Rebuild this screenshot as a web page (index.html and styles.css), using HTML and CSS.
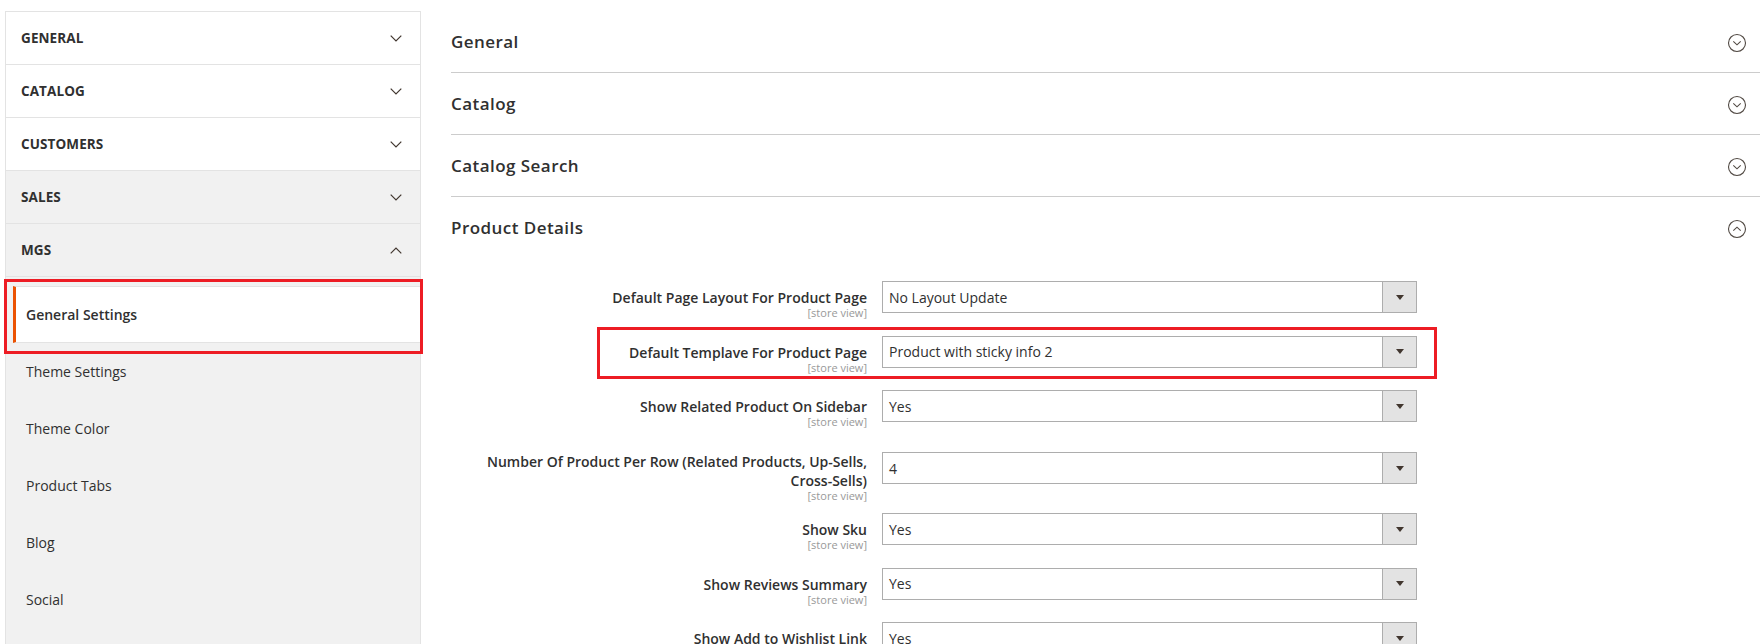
FILE: index.html
```html
<!DOCTYPE html>
<html lang="en">
<head>
<meta charset="utf-8">
<title>Configuration</title>
<link rel="stylesheet" href="styles.css">
</head>
<body>
<div class="page">
  <aside class="sidebar">
    <div class="nav-section">
      <div class="nav-title"><span>General</span>
        <svg class="chev" viewBox="0 0 12 7" width="12" height="7"><polyline points="0.7,0.7 6,6 11.3,0.7"/></svg>
      </div>
    </div>
    <div class="nav-section">
      <div class="nav-title"><span>Catalog</span>
        <svg class="chev" viewBox="0 0 12 7" width="12" height="7"><polyline points="0.7,0.7 6,6 11.3,0.7"/></svg>
      </div>
    </div>
    <div class="nav-section">
      <div class="nav-title"><span>Customers</span>
        <svg class="chev" viewBox="0 0 12 7" width="12" height="7"><polyline points="0.7,0.7 6,6 11.3,0.7"/></svg>
      </div>
    </div>
    <div class="nav-section muted">
      <div class="nav-title"><span>Sales</span>
        <svg class="chev" viewBox="0 0 12 7" width="12" height="7"><polyline points="0.7,0.7 6,6 11.3,0.7"/></svg>
      </div>
    </div>
    <div class="nav-section muted open">
      <div class="nav-title"><span>MGS</span>
        <svg class="chev" viewBox="0 0 12 7" width="12" height="7"><polyline points="0.7,6.3 6,1 11.3,6.3"/></svg>
      </div>
      <ul class="nav-items">
        <li class="nav-item active">General Settings<span class="mark mark-nav"></span></li>
        <li class="nav-item">Theme Settings</li>
        <li class="nav-item">Theme Color</li>
        <li class="nav-item">Product Tabs</li>
        <li class="nav-item">Blog</li>
        <li class="nav-item">Social</li>
      </ul>
    </div>
  </aside>

  <main class="content">
    <div class="section">
      <span class="section-title">General</span>
      <svg class="toggle" viewBox="0 0 20 20" width="20" height="20"><circle cx="10" cy="10" r="8.5"/><polyline points="6.3,8.3 10,11.8 13.7,8.3"/></svg>
    </div>
    <div class="section">
      <span class="section-title">Catalog</span>
      <svg class="toggle" viewBox="0 0 20 20" width="20" height="20"><circle cx="10" cy="10" r="8.5"/><polyline points="6.3,8.3 10,11.8 13.7,8.3"/></svg>
    </div>
    <div class="section">
      <span class="section-title">Catalog Search</span>
      <svg class="toggle" viewBox="0 0 20 20" width="20" height="20"><circle cx="10" cy="10" r="8.5"/><polyline points="6.3,8.3 10,11.8 13.7,8.3"/></svg>
    </div>
    <div class="section open">
      <span class="section-title">Product Details</span>
      <svg class="toggle" viewBox="0 0 20 20" width="20" height="20"><circle cx="10" cy="10" r="8.5"/><polyline points="6.3,11.7 10,8.2 13.7,11.7"/></svg>
    </div>

    <div class="fieldset">
      <div class="field">
        <div class="label"><span class="label-text">Default Page Layout For Product Page</span><span class="scope">[store view]</span></div>
        <div class="select"><span class="select-value">No Layout Update</span><span class="select-btn"><i class="arrow"></i></span></div>
      </div>
      <div class="field">
        <div class="label"><span class="label-text">Default Templave For Product Page</span><span class="scope">[store view]</span></div>
        <div class="select"><span class="select-value">Product with sticky info 2</span><span class="select-btn"><i class="arrow"></i></span></div>
        <span class="mark mark-field"></span>
      </div>
      <div class="field pre-tall">
        <div class="label"><span class="label-text">Show Related Product On Sidebar</span><span class="scope">[store view]</span></div>
        <div class="select"><span class="select-value">Yes</span><span class="select-btn"><i class="arrow"></i></span></div>
      </div>
      <div class="field tall">
        <div class="label"><span class="label-text">Number Of Product Per Row (Related Products, Up-Sells, Cross-Sells)</span><span class="scope">[store view]</span></div>
        <div class="select"><span class="select-value">4</span><span class="select-btn"><i class="arrow"></i></span></div>
      </div>
      <div class="field">
        <div class="label"><span class="label-text">Show Sku</span><span class="scope">[store view]</span></div>
        <div class="select"><span class="select-value">Yes</span><span class="select-btn"><i class="arrow"></i></span></div>
      </div>
      <div class="field">
        <div class="label"><span class="label-text">Show Reviews Summary</span><span class="scope">[store view]</span></div>
        <div class="select"><span class="select-value">Yes</span><span class="select-btn"><i class="arrow"></i></span></div>
      </div>
      <div class="field">
        <div class="label"><span class="label-text">Show Add to Wishlist Link</span><span class="scope">[store view]</span></div>
        <div class="select"><span class="select-value">Yes</span><span class="select-btn"><i class="arrow"></i></span></div>
      </div>
    </div>
  </main>
</div>
</body>
</html>
```

FILE: styles.css
```css
html, body {
  margin: 0;
  padding: 0;
  overflow: hidden;
  background: #ffffff;
}

body {
  font-family: "Open Sans", "Noto Sans", "Liberation Sans", sans-serif;
  color: #303030;
  font-size: 14px;
}

.page {
  display: flex;
  align-items: flex-start;
  padding: 11px 0 0 5px;
}

/* ---------- sidebar ---------- */
.sidebar {
  position: relative;
  flex: 0 0 416px;
  box-sizing: border-box;
  border: 1px solid #e3e3e3;
  background: #f1f1f1;
  min-height: 720px;
}

.nav-section {
  background: #ffffff;
}

.nav-section.muted {
  background: #f1f1f1;
}

.nav-title {
  display: flex;
  align-items: center;
  justify-content: space-between;
  height: 52px;
  padding: 0 18px 0 15px;
  border-bottom: 1px solid #e3e3e3;
  font-size: 13.5px;
  font-weight: 700;
  letter-spacing: 0.1px;
  text-transform: uppercase;
  color: #303030;
}

.chev {
  fill: none;
  stroke: #41362f;
  stroke-width: 1.2;
}

.nav-items {
  list-style: none;
  margin: 0;
  padding: 9px 0 0 0;
}

.nav-item {
  position: relative;
  display: flex;
  align-items: center;
  box-sizing: border-box;
  height: 57px;
  margin-left: 7px;
  padding-left: 10px;
  border-left: 3px solid transparent;
  border-top: 1px solid transparent;
  border-bottom: 1px solid transparent;
  font-size: 14px;
  color: #303030;
}

.nav-item.active {
  background: #ffffff;
  border-left-color: #eb5202;
  border-top-color: #e3e3e3;
  border-bottom-color: #e3e3e3;
  font-weight: 600;
}

/* red annotation frames */
.mark {
  position: absolute;
  box-sizing: border-box;
  border: 3px solid #ed1c24;
  pointer-events: none;
}

.mark-nav {
  left: -12px;
  top: -8px;
  width: 419px;
  height: 75px;
}

.mark-field {
  left: 146px;
  top: -8.5px;
  width: 840px;
  height: 52px;
}

/* ---------- content ---------- */
.content {
  flex: 1;
  margin-left: 30px;
}

.section {
  display: flex;
  align-items: center;
  justify-content: space-between;
  height: 61px;
  padding-right: 13px;
  border-bottom: 1px solid #cccccc;
}

.section.open {
  border-bottom: none;
}

.section-title {
  font-size: 17px;
  font-weight: 600;
  letter-spacing: 0.45px;
  color: #303030;
}

.toggle {
  margin-top: 3px;
  fill: none;
  stroke: #514943;
  stroke-width: 1.1;
}

.fieldset {
  padding-top: 23px;
}

.field {
  position: relative;
  display: flex;
  align-items: flex-start;
  margin-bottom: 17.5px;
}

.field.pre-tall {
  margin-bottom: 25px;
}

.field.tall {
  margin-bottom: 12px;
}

.label {
  flex: 0 0 416px;
  box-sizing: border-box;
  padding-top: 7px;
  padding-left: 30px;
  text-align: right;
}

.field.tall .label {
  padding-top: 0;
}

.label-text {
  display: block;
  font-size: 14px;
  line-height: 19px;
  font-weight: 600;
  color: #303030;
}

.scope {
  display: block;
  font-size: 11px;
  line-height: 11px;
  color: #999999;
}

.select {
  display: flex;
  align-items: stretch;
  box-sizing: border-box;
  width: 535px;
  height: 32px;
  margin-left: 15px;
  border: 1px solid #adadad;
  background: #ffffff;
}

.select-value {
  flex: 1;
  display: flex;
  align-items: center;
  padding-left: 6px;
  font-size: 14px;
  color: #303030;
}

.select-btn {
  display: flex;
  align-items: center;
  justify-content: center;
  width: 33px;
  border-left: 1px solid #adadad;
  background: #e3e3e3;
}

.arrow {
  display: block;
  width: 0;
  height: 0;
  border-left: 4px solid transparent;
  border-right: 4px solid transparent;
  border-top: 5px solid #41362f;
}
```
